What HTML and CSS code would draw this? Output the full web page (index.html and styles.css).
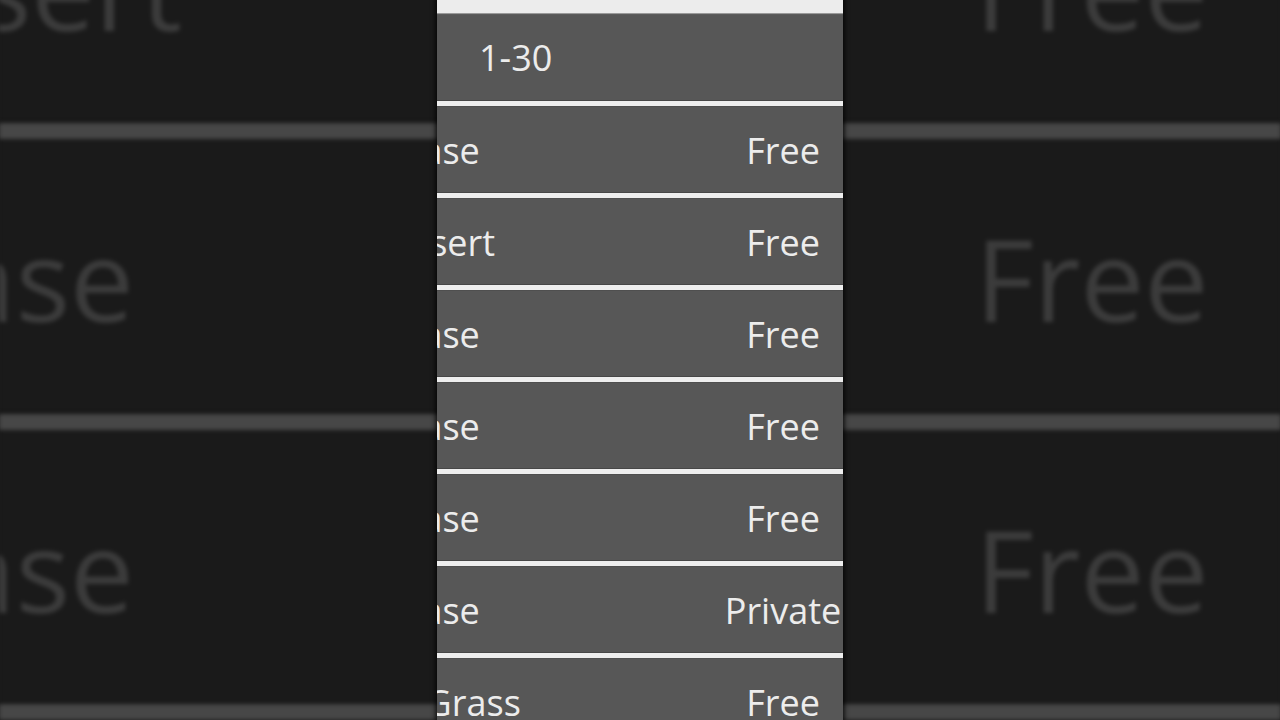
FILE: index.html
```html
<!DOCTYPE html>
<html lang="en">
<head>
    <meta charset="UTF-8">
    <meta name="viewport" content="width=device-width, initial-scale=1.0">
    <title>Rooms</title>
    <link rel="stylesheet" href="styles.css">
</head>
<body>
    <main class="screen">
        <!-- blurred, zoomed copy of the list behind the panel -->
        <div class="backdrop" aria-hidden="true">
            <div class="rooms">
                <div class="rooms-top"></div>
                <div class="rooms-head">1-30</div>
                <div class="room"><span class="room-map">Base</span><span class="room-state">Free</span></div>
                <div class="room"><span class="room-map">Desert</span><span class="room-state">Free</span></div>
                <div class="room"><span class="room-map">Base</span><span class="room-state">Free</span></div>
                <div class="room"><span class="room-map">Base</span><span class="room-state">Free</span></div>
                <div class="room"><span class="room-map">Base</span><span class="room-state">Free</span></div>
                <div class="room"><span class="room-map">Base</span><span class="room-state">Private</span></div>
                <div class="room"><span class="room-map">Tall Grass</span><span class="room-state">Free</span></div>
            </div>
        </div>

        <div class="rooms front">
            <div class="rooms-top"></div>
            <div class="rooms-head">1-30</div>
            <div class="room"><span class="room-map">Base</span><span class="room-state">Free</span></div>
            <div class="room"><span class="room-map">Desert</span><span class="room-state">Free</span></div>
            <div class="room"><span class="room-map">Base</span><span class="room-state">Free</span></div>
            <div class="room"><span class="room-map">Base</span><span class="room-state">Free</span></div>
            <div class="room"><span class="room-map">Base</span><span class="room-state">Free</span></div>
            <div class="room"><span class="room-map">Base</span><span class="room-state">Private</span></div>
            <div class="room"><span class="room-map">Tall Grass</span><span class="room-state">Free</span></div>
        </div>
    </main>
</body>
</html>
```

FILE: styles.css
```css
* { box-sizing: border-box; }
html, body { margin: 0; height: 100%; }
body {
    background: #1b1b1b;
    font-family: 'Open Sans', 'Noto Sans', sans-serif;
    overflow: hidden;
}
.screen {
    position: relative;
    height: 720px;
    display: flex;
    justify-content: center;
    overflow: hidden;
}
.backdrop {
    position: absolute;
    inset: 0;
    display: flex;
    justify-content: center;
}
.backdrop .rooms {
    color: #c4c4c4;
    transform: scale(3.16);
    transform-origin: 50% 360px;
    filter: brightness(0.3) blur(0.6px);
    box-shadow: none;
}
.rooms {
    width: 406px;
    height: 720px;
    flex-shrink: 0;
    overflow: hidden;
    background: #575757;
    color: #ececec;
    font-size: 36px;
    line-height: 1.36;
}
.front {
    position: relative;
    z-index: 1;
    box-shadow: 0 0 4px 2px rgba(0,0,0,0.7);
}
.rooms-top {
    height: 15px;
    background: linear-gradient(#ececec 0 13px, #9a9a9a 13px 14px, #5c5c5c 14px);
}
.rooms-head {
    height: 85px;
    display: flex;
    align-items: center;
    padding-left: 42px;
    padding-top: 2px;
}
.room {
    height: 92px;
    padding-top: 11px;
    display: flex;
    align-items: center;
    white-space: nowrap;
    background: linear-gradient(#474747 0 1px, #eeeeee 1px 6px, #4f4f4f 6px 7px, transparent 7px);
}
.room-map {
    flex-shrink: 0;
    width: 200px;
    margin-left: -97.5px;
    text-align: center;
}
.room-state {
    flex-shrink: 0;
    width: 120px;
    margin-left: auto;
    text-align: center;
}
```
